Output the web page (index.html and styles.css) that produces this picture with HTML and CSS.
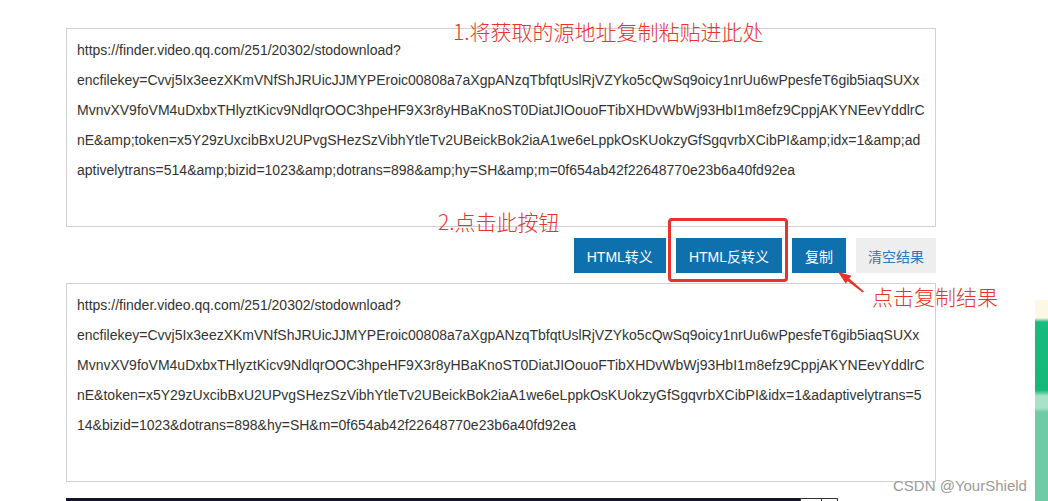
FILE: index.html
```html
<!DOCTYPE html>
<html>

<head lang="zh-CN">
	<meta charset="UTF-8">
	<title>HTML转义</title>
	<link rel="stylesheet" href="styles.css">
</head>

<body>
	<div class="page">
		<div class="tool">
			<textarea class="code-box" readonly wrap="off">https://finder.video.qq.com/251/20302/stodownload?
encfilekey=Cvvj5Ix3eezXKmVNfShJRUicJJMYPEroic00808a7aXgpANzqTbfqtUslRjVZYko5cQwSq9oicy1nrUu6wPpesfeT6gib5iaqSUXx
MvnvXV9foVM4uDxbxTHlyztKicv9NdlqrOOC3hpeHF9X3r8yHBaKnoST0DiatJIOouoFTibXHDvWbWj93HbI1m8efz9CppjAKYNEevYddlrC
nE&amp;amp;token=x5Y29zUxcibBxU2UPvgSHezSzVibhYtleTv2UBeickBok2iaA1we6eLppkOsKUokzyGfSgqvrbXCibPI&amp;amp;idx=1&amp;amp;ad
aptivelytrans=514&amp;amp;bizid=1023&amp;amp;dotrans=898&amp;amp;hy=SH&amp;amp;m=0f654ab42f22648770e23b6a40fd92ea</textarea>

			<div class="btn-row">
				<button type="button" class="btn">HTML转义</button>
				<button type="button" class="btn">HTML反转义</button>
				<button type="button" class="btn">复制</button>
				<button type="button" class="btn btn-clear">清空结果</button>
			</div>

			<textarea class="code-box" readonly wrap="off">https://finder.video.qq.com/251/20302/stodownload?
encfilekey=Cvvj5Ix3eezXKmVNfShJRUicJJMYPEroic00808a7aXgpANzqTbfqtUslRjVZYko5cQwSq9oicy1nrUu6wPpesfeT6gib5iaqSUXx
MvnvXV9foVM4uDxbxTHlyztKicv9NdlqrOOC3hpeHF9X3r8yHBaKnoST0DiatJIOouoFTibXHDvWbWj93HbI1m8efz9CppjAKYNEevYddlrC
nE&amp;token=x5Y29zUxcibBxU2UPvgSHezSzVibhYtleTv2UBeickBok2iaA1we6eLppkOsKUokzyGfSgqvrbXCibPI&amp;idx=1&amp;adaptivelytrans=5
14&amp;bizid=1023&amp;dotrans=898&amp;hy=SH&amp;m=0f654ab42f22648770e23b6a40fd92ea</textarea>

			<div class="bottom-bar">
				<div class="bar-dark"></div>
				<div class="bar-cell"></div>
				<div class="bar-cell"></div>
			</div>
		</div>

		<!-- 标注 -->
		<div class="note note-1">1.将获取的源地址复制粘贴进此处</div>
		<div class="note note-2">2.点击此按钮</div>
		<div class="note note-3">点击复制结果</div>
		<div class="mark-box"></div>
		<svg class="mark-arrow" width="34" height="30" viewBox="0 0 34 30">
			<polygon points="4,6 17.5,9.8 15.3,12.6 30,25.6 28.6,26.4 13.4,14.9 11.8,17.8" fill="#e8322b" />
		</svg>

		<div class="side-deco"></div>
		<div class="watermark">CSDN @YourShield</div>
	</div>
</body>

</html>
```

FILE: styles.css
```css
* {
	margin: 0;
	padding: 0;
	box-sizing: border-box;
}

body {
	background: #fff;
	overflow: hidden;
	font-family: "Liberation Sans", Arial, "Noto Sans CJK SC", sans-serif;
}

.page {
	position: relative;
	width: 1048px;
	height: 501px;
	overflow: hidden;
}

.tool {
	width: 870px;
	margin-left: 66px;
	padding-top: 28px;
	display: flex;
	flex-direction: column;
}

.code-box {
	display: block;
	width: 870px;
	height: 199px;
	border: 1px solid #cfcfd4;
	padding: 6px 10px;
	font-family: "Liberation Sans", Arial, sans-serif;
	font-size: 14px;
	line-height: 30px;
	color: #333;
	resize: none;
	overflow: hidden;
	white-space: pre;
	outline: none;
	background: #fff;
}

.btn-row {
	display: flex;
	justify-content: flex-end;
	gap: 10px;
	margin: 11px 0 10px;
}

.btn {
	height: 35px;
	padding: 0 13px;
	border: none;
	background: #0f70ae;
	color: #fff;
	font-family: "Liberation Sans", Arial, "Noto Sans CJK SC", sans-serif;
	font-size: 14px;
	cursor: pointer;
}

.btn-clear {
	padding: 0 12px;
	background: #eeeeee;
	color: #2a79bd;
}

.bottom-bar {
	display: flex;
	margin-top: 16px;
	height: 12px;
}

.bar-dark {
	width: 734px;
	background: #15122b;
}

.bar-cell {
	width: 22px;
	border: 1px solid #333;
	border-bottom: none;
	background: #fff;
}

.bar-cell + .bar-cell {
	width: 16px;
	border-left: none;
}

/* 红色标注 */
.note {
	position: absolute;
	font-family: "Noto Sans CJK SC", "Liberation Sans", sans-serif;
	font-size: 21px;
	font-weight: 300;
	line-height: 25px;
	color: #e8322b;
	white-space: nowrap;
}

.note-1 {
	left: 453px;
	top: 19px;
}

.note-2 {
	left: 438px;
	top: 209px;
}

.note-3 {
	left: 872px;
	top: 284px;
}

.mark-box {
	position: absolute;
	left: 668px;
	top: 218px;
	width: 120px;
	height: 64px;
	border: 3px solid #e8322b;
	border-radius: 4px;
}

.mark-arrow {
	position: absolute;
	left: 834px;
	top: 266px;
}

.side-deco {
	position: absolute;
	left: 1035px;
	top: 300px;
	width: 13px;
	height: 201px;
	background: linear-gradient(180deg, #fdf8e4 0, #fdf8e4 18px, #17bb7d 22px, #14b878 90px, #a8e3c7 96px, #a8e3c7 108px, #6fcba6 112px, #6fcba6 100%);
}

.watermark {
	position: absolute;
	left: 893px;
	top: 477px;
	font-family: "Liberation Sans", Arial, sans-serif;
	font-size: 15px;
	color: #9a9a9a;
	text-shadow: 0 0 2px #fff;
	white-space: nowrap;
}
```
